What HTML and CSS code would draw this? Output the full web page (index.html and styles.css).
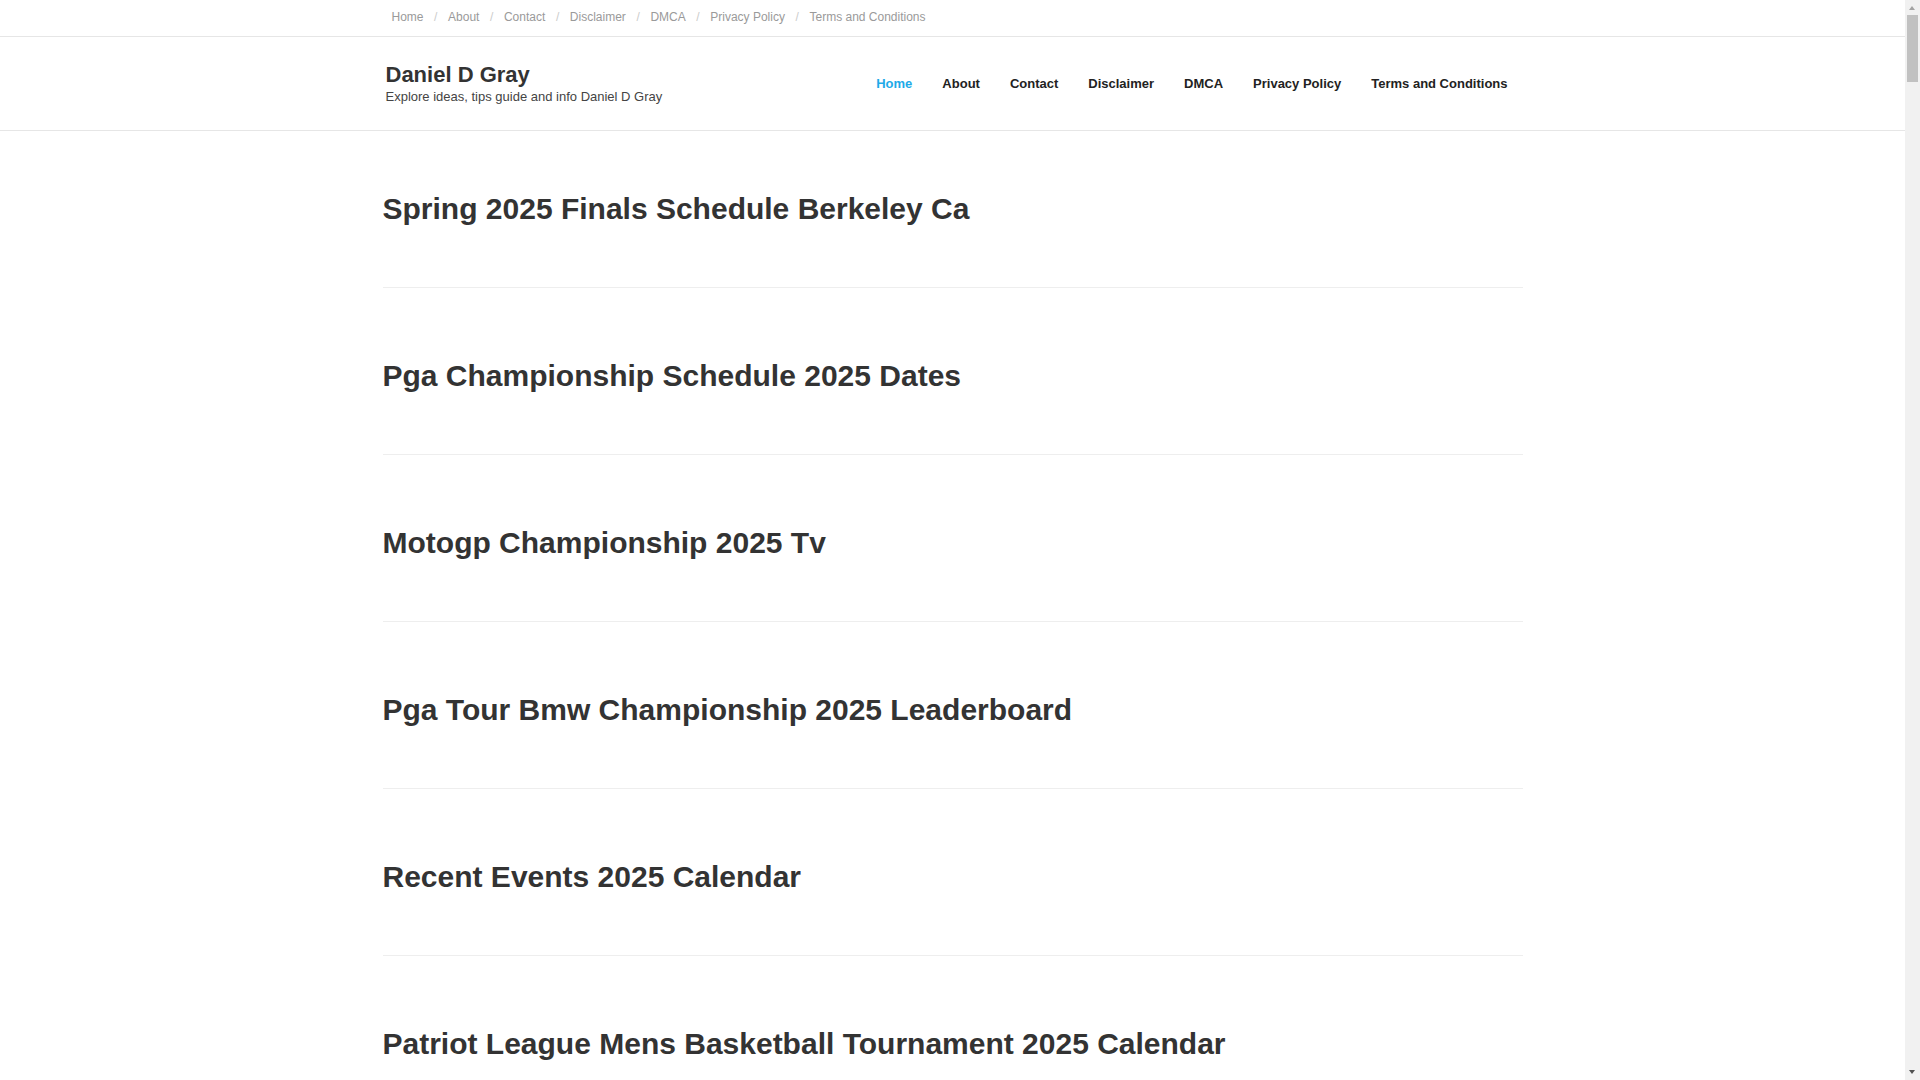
FILE: index.html
```html
<!DOCTYPE html>
<html lang="en">
<head>
<meta charset="utf-8">
<title>Daniel D Gray</title>
<link rel="stylesheet" href="styles.css">
</head>
<body>
<div class="page">
  <div class="topbar">
    <div class="container">
      <ul class="topnav">
        <li><a href="#">Home</a></li>
        <li class="sep">/</li>
        <li><a href="#">About</a></li>
        <li class="sep">/</li>
        <li><a href="#">Contact</a></li>
        <li class="sep">/</li>
        <li><a href="#">Disclaimer</a></li>
        <li class="sep">/</li>
        <li><a href="#">DMCA</a></li>
        <li class="sep">/</li>
        <li><a href="#">Privacy Policy</a></li>
        <li class="sep">/</li>
        <li><a href="#">Terms and Conditions</a></li>
      </ul>
    </div>
  </div>
  <header class="site-header">
    <div class="container header-inner">
      <div class="brand">
        <div class="site-title">Daniel D Gray</div>
        <div class="site-desc">Explore ideas, tips guide and info Daniel D Gray</div>
      </div>
      <nav class="mainnav">
        <a class="active" href="#">Home</a>
        <a href="#">About</a>
        <a href="#">Contact</a>
        <a href="#">Disclaimer</a>
        <a href="#">DMCA</a>
        <a href="#">Privacy Policy</a>
        <a href="#">Terms and Conditions</a>
      </nav>
    </div>
  </header>
  <main class="container posts">
    <article class="post"><h2 class="post-title"><a href="#">Spring 2025 Finals Schedule Berkeley Ca</a></h2></article>
    <article class="post"><h2 class="post-title"><a href="#">Pga Championship Schedule 2025 Dates</a></h2></article>
    <article class="post"><h2 class="post-title"><a href="#">Motogp Championship 2025 Tv</a></h2></article>
    <article class="post"><h2 class="post-title"><a href="#">Pga Tour Bmw Championship 2025 Leaderboard</a></h2></article>
    <article class="post"><h2 class="post-title"><a href="#">Recent Events 2025 Calendar</a></h2></article>
    <article class="post"><h2 class="post-title"><a href="#">Patriot League Mens Basketball Tournament 2025 Calendar</a></h2></article>
  </main>
</div>
<div class="scrollbar" aria-hidden="true">
  <div class="sb-arrow sb-up"></div>
  <div class="sb-thumb"></div>
  <div class="sb-arrow sb-down"></div>
</div>
</body>
</html>
```

FILE: styles.css
```css
html, body {
  margin: 0;
  padding: 0;
  background: #ffffff;
}

html {
  scrollbar-width: none;
}

html::-webkit-scrollbar {
  display: none;
}

body {
  font-family: "Liberation Sans", Arial, sans-serif;
  color: #333333;
}

.page {
  margin-right: 15px;
}

a {
  text-decoration: none;
  color: inherit;
}

.container {
  width: 1140px;
  margin: 0 auto;
}

/* top bar */
.topbar {
  height: 36px;
  border-bottom: 1px solid #e6e6e6;
}

.topnav {
  list-style: none;
  margin: 0;
  padding: 1px 0 3px 9px;
  display: flex;
  font-size: 12px;
  line-height: 32px;
  color: #9a9a9a;
}

.topnav .sep {
  color: #cccccc;
  margin: 0 10.6px;
}

/* header */
.site-header {
  height: 93px;
  border-bottom: 1px solid #e6e6e6;
}

.header-inner {
  height: 100%;
  display: flex;
  align-items: center;
  justify-content: space-between;
}

.brand {
  padding-left: 3px;
  padding-top: 1px;
}

.site-title {
  font-size: 22px;
  font-weight: bold;
  line-height: 24px;
  color: #333333;
}

.site-desc {
  margin-top: 1px;
  font-size: 13px;
  line-height: 18px;
  color: #444444;
}

.mainnav {
  display: flex;
  margin-right: 0;
}

.mainnav a {
  padding: 0 15px;
  font-size: 13px;
  font-weight: bold;
  line-height: 20px;
  color: #222222;
}

.mainnav a.active {
  color: #1eaae8;
}

/* posts */
.posts {
  height: 950px;
  overflow: hidden;
}

.post {
  padding: 61px 0 62px;
  margin-bottom: 10px;
  border-bottom: 1px solid #eeeeee;
}

.post-title {
  margin: 0;
  font-size: 30px;
  line-height: 33px;
  font-weight: bold;
  color: #333333;
}

/* drawn browser scrollbar */
.scrollbar {
  position: fixed;
  top: 0;
  right: 0;
  width: 15px;
  height: 100vh;
  background: #f1f1f1;
}

.sb-thumb {
  position: absolute;
  left: 2px;
  top: 15px;
  width: 11px;
  height: 67px;
  background: #c1c1c1;
}

.sb-arrow {
  position: absolute;
  left: 4px;
  width: 0;
  height: 0;
  border-left: 3.5px solid transparent;
  border-right: 3.5px solid transparent;
}

.sb-up {
  top: 6px;
  border-bottom: 4px solid #a3a3a3;
}

.sb-down {
  bottom: 6px;
  border-top: 4px solid #505050;
}
```
